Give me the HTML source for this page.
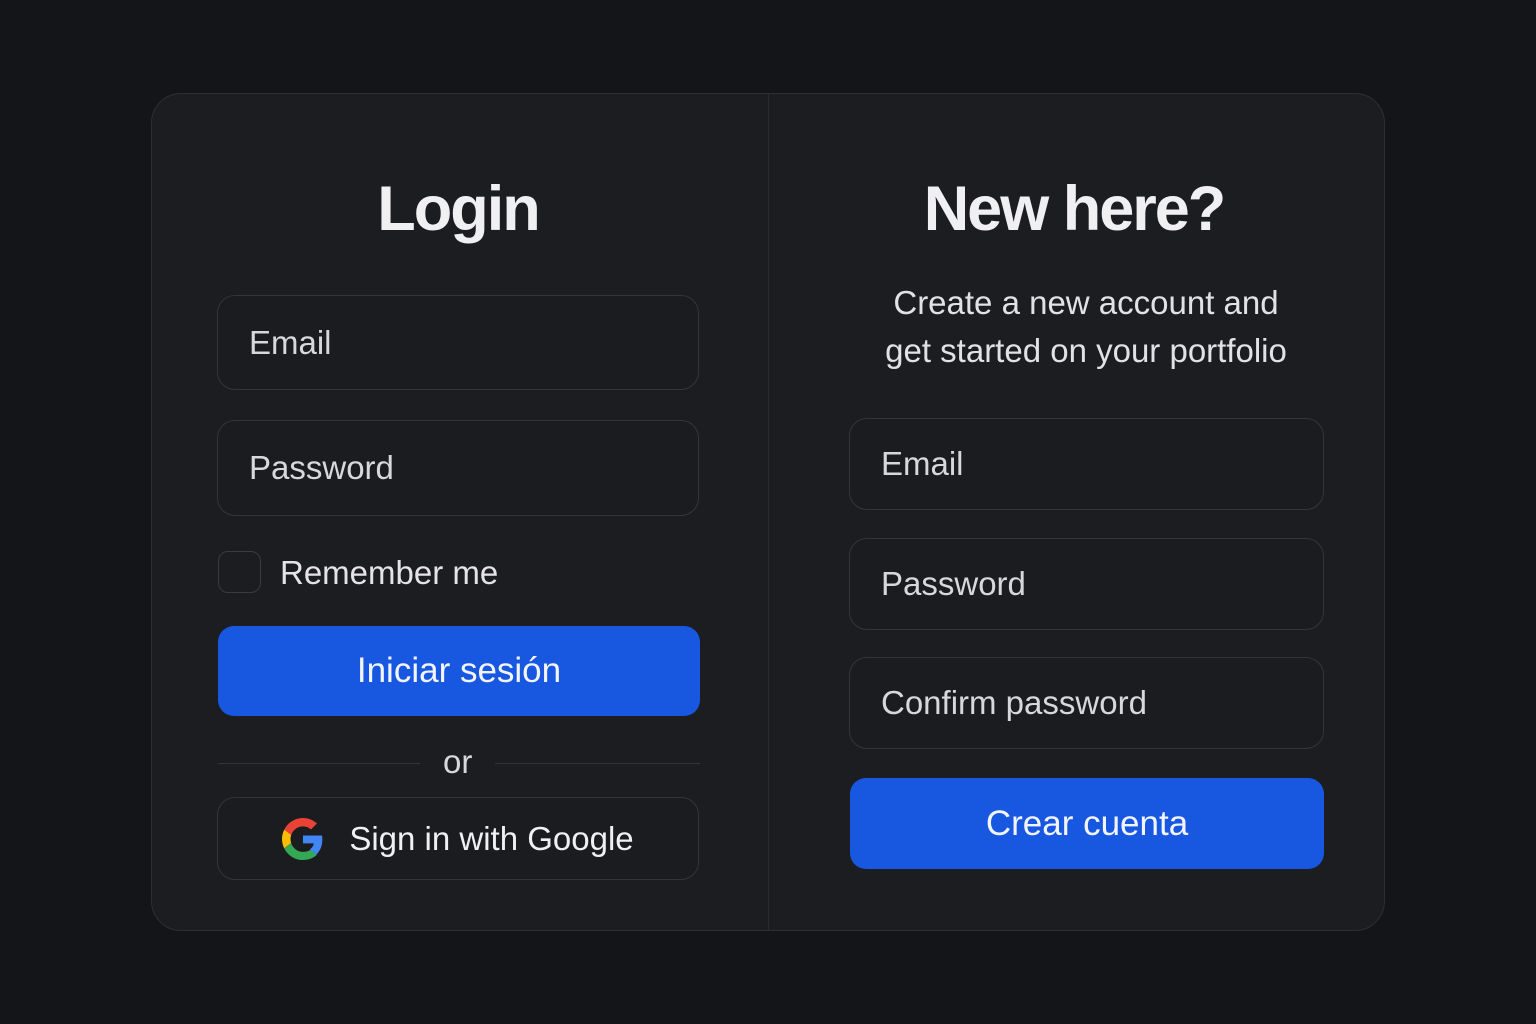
<!DOCTYPE html>
<html><head><meta charset="utf-8"><style>
*{box-sizing:border-box;margin:0;padding:0}
body{width:1536px;height:1024px;background:#141519;font-family:"Liberation Sans",sans-serif;position:relative;overflow:hidden;color:#e6e6e8}
.card{position:absolute;left:151px;top:93px;width:1234px;height:838px;background:#1c1d21;border:1px solid #2d2e33;border-radius:30px}
.div{position:absolute;left:768px;top:94px;width:1px;height:836px;background:#2a2b30}
.a{position:absolute}
.h{font-weight:bold;font-size:63px;color:#f0f0f2;text-align:center;letter-spacing:-2px}
.in{position:absolute;border:1px solid #34353a;border-radius:18px;background:#1b1c20;font-size:33px;color:#d8d8dc;padding-left:31px;display:flex;align-items:center}
.btn{position:absolute;background:#1858e0;border-radius:16px;color:#f2f5ff;font-size:35px;display:flex;align-items:center;justify-content:center}
</style></head><body>
<div class="card"></div><div class="div"></div>
<div class="a h" style="left:218px;top:173px;width:480px">Login</div>
<div class="a h" style="left:837px;top:173px;width:474px">New here?</div>
<div class="a" style="left:836px;top:279px;width:500px;text-align:center;font-size:33px;line-height:48px;color:#e2e2e5">Create a new account and<br>get started on your portfolio</div>
<div class="in" style="left:217px;top:295px;width:482px;height:95px">Email</div>
<div class="in" style="left:217px;top:420px;width:482px;height:96px">Password</div>
<div class="a" style="left:218px;top:551px;width:43px;height:42px;border:1px solid #3a3b40;border-radius:10px"></div>
<div class="a" style="left:280px;top:554px;font-size:33px;color:#e4e4e7">Remember me</div>
<div class="btn" style="left:218px;top:626px;width:482px;height:90px">Iniciar sesión</div>
<div class="a" style="left:218px;top:763px;width:202px;height:1px;background:#34353a"></div>
<div class="a" style="left:495px;top:763px;width:205px;height:1px;background:#34353a"></div>
<div class="a" style="left:443px;top:743px;font-size:33px;color:#d8d8dc">or</div>
<div class="in" style="left:217px;top:797px;width:482px;height:83px;justify-content:center;padding-left:0;color:#f0f0f2">
<svg width="42" height="42" viewBox="0 0 48 48" style="margin-right:25px"><path fill="#EA4335" d="M24 9.5c3.5 0 6.6 1.2 9.1 3.6l6.8-6.8C35.8 2.4 30.3 0 24 0 14.6 0 6.6 5.4 2.6 13.3l7.9 6.1C12.4 13.7 17.7 9.5 24 9.5z"/><path fill="#4285F4" d="M46.1 24.6c0-1.6-.1-3.1-.4-4.6H24v9h12.4c-.5 2.9-2.2 5.3-4.6 7l7.4 5.8c4.4-4 6.9-10 6.9-17.2z"/><path fill="#FBBC05" d="M10.5 28.6c-.5-1.4-.8-3-.8-4.6s.3-3.2.8-4.6l-7.9-6.1C.9 16.6 0 20.2 0 24s.9 7.4 2.6 10.7l7.9-6.1z"/><path fill="#34A853" d="M24 48c6.5 0 11.9-2.1 15.8-5.8l-7.4-5.8c-2.1 1.4-4.8 2.3-8.4 2.3-6.3 0-11.6-4.2-13.5-10l-7.9 6.1C6.6 42.6 14.6 48 24 48z"/></svg>Sign in with Google</div>
<div class="in" style="left:849px;top:418px;width:475px;height:92px">Email</div>
<div class="in" style="left:849px;top:538px;width:475px;height:92px">Password</div>
<div class="in" style="left:849px;top:657px;width:475px;height:92px">Confirm password</div>
<div class="btn" style="left:850px;top:778px;width:474px;height:91px">Crear cuenta</div>
</body></html>
